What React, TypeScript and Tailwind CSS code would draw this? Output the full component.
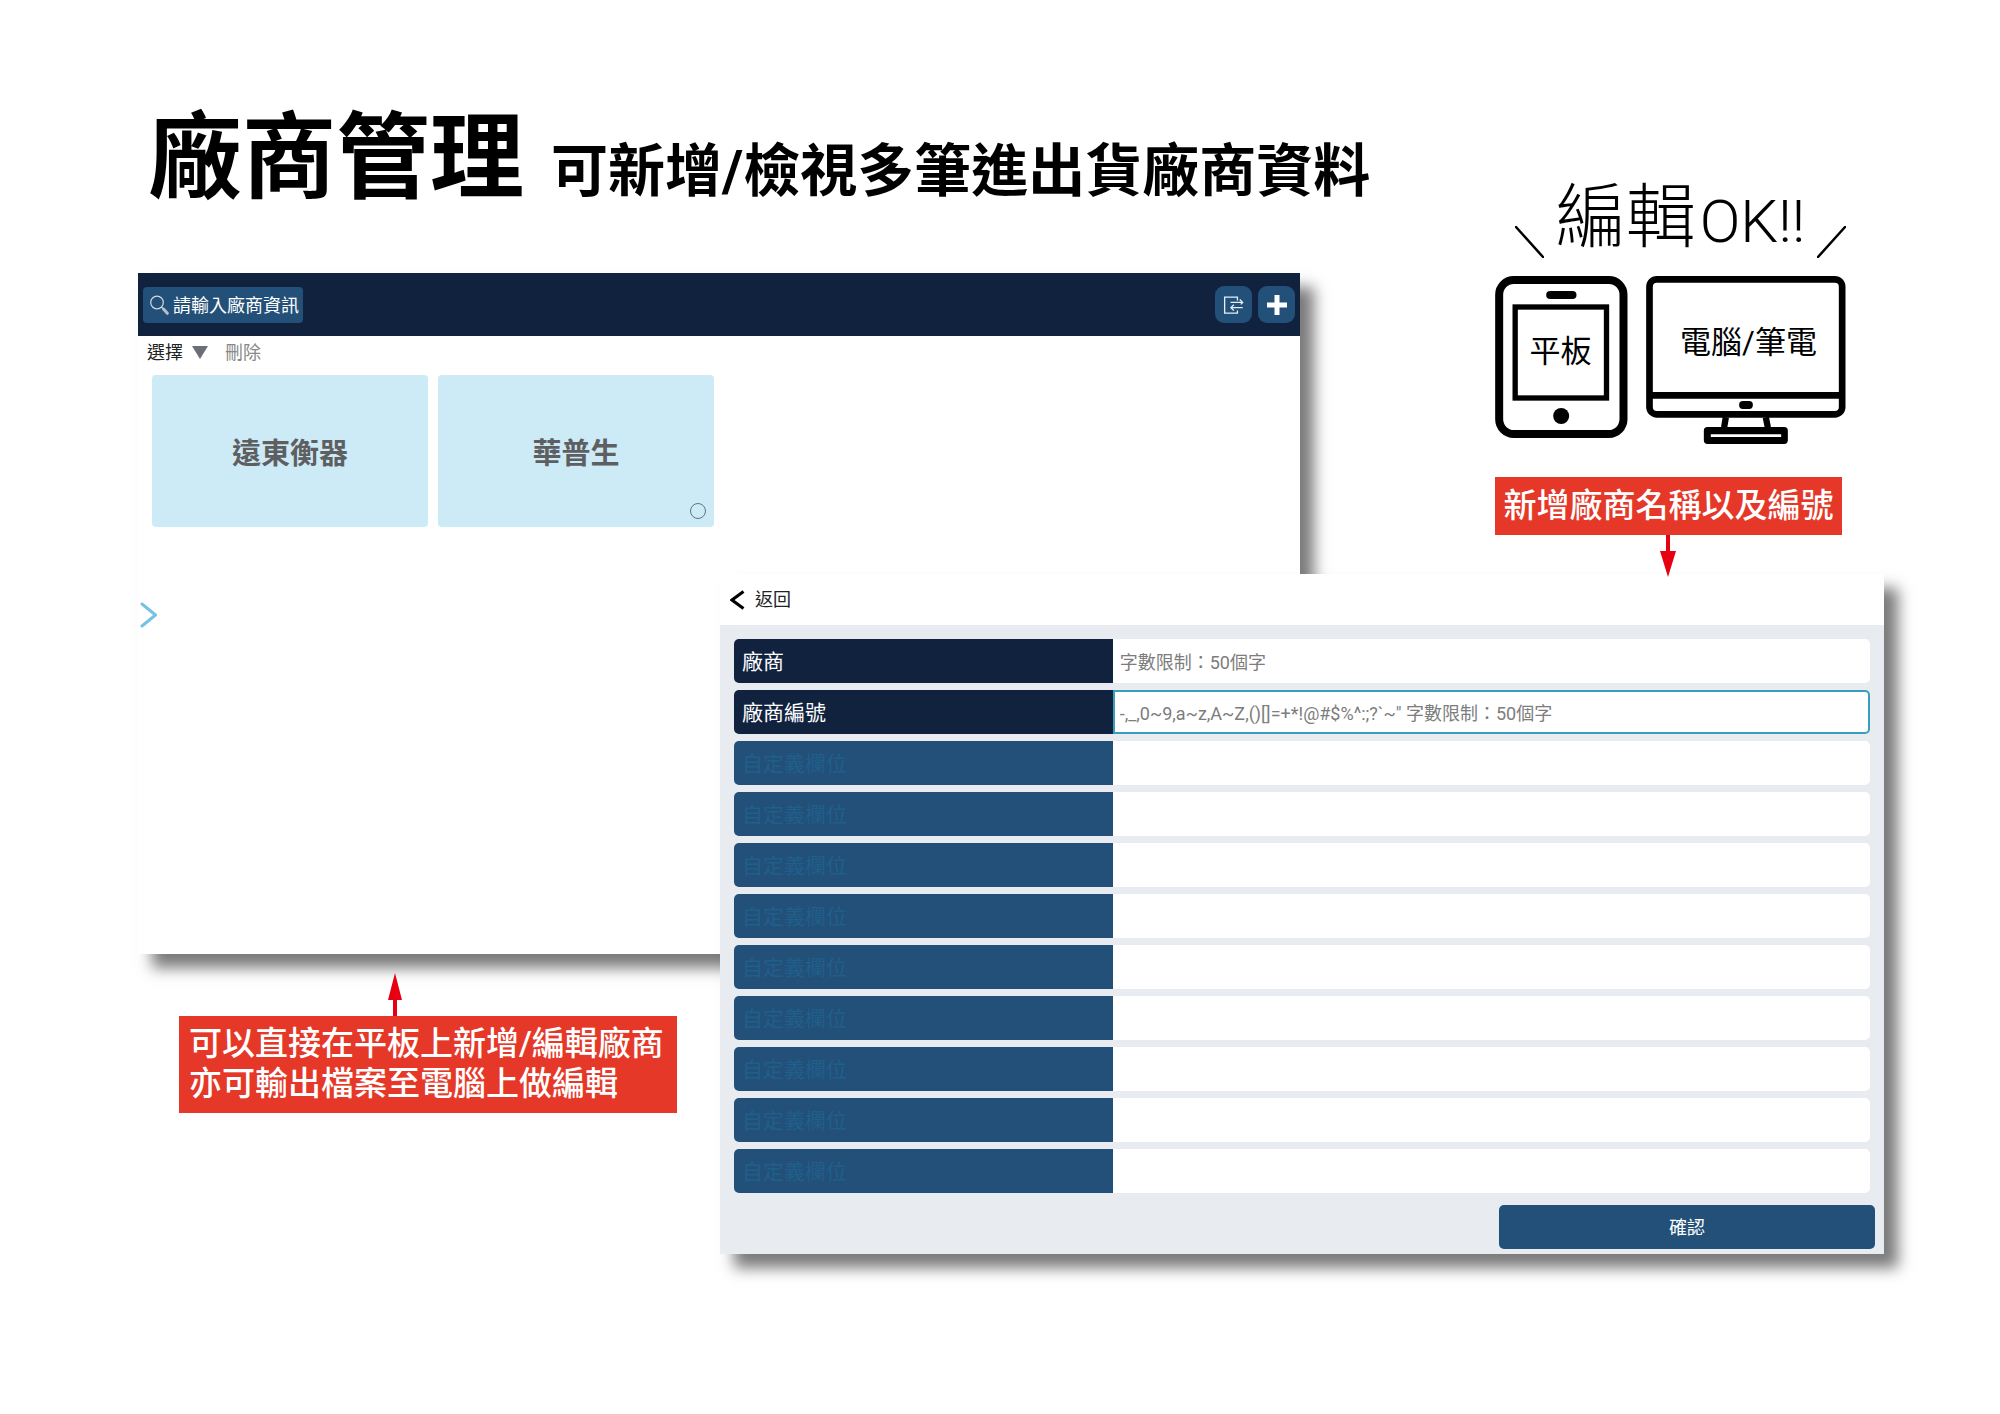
interface FieldRowProps {
  id: string;
  label: string;
  placeholder?: string;
  custom?: boolean;
  active?: boolean;
}

const fields: FieldRowProps[] = [
  { id: 'vendor', label: '廠商', placeholder: '字數限制：50個字' },
  {
    id: 'vendor-code',
    label: '廠商編號',
    placeholder: '-,_,0~9,a~z,A~Z,()[]=+*!@#$%^:;?`~" 字數限制：50個字',
    active: true,
  },
  ...Array.from({ length: 9 }, (_, i) => ({
    id: `custom-${i + 1}`,
    label: '自定義欄位',
    custom: true,
  })),
];

function FieldRow({ id, label, placeholder, custom, active }: FieldRowProps) {
  return (
    <div className="grid h-11 grid-cols-[1fr_2fr]">
      <label
        htmlFor={id}
        className={`flex items-center rounded-l-[5px] px-2 pt-1 text-[21px] ${
          custom ? 'bg-[#235078] text-[#205f8b]' : 'bg-[#11223f] text-white'
        }`}
      >
        {label}
      </label>
      <input
        id={id}
        type="text"
        placeholder={placeholder}
        className={`min-w-0 rounded-r-[5px] border-2 bg-white px-[5px] pt-0.5 text-[18px] outline-none placeholder:text-[#7d7d7d] ${
          active ? 'border-[#3a9fbf]' : 'border-white'
        }`}
      />
    </div>
  );
}

function VendorCard({ name, selectable }: { name: string; selectable?: boolean }) {
  return (
    <article className="relative flex h-[152px] items-center justify-center rounded bg-[#cdebf7] pt-2">
      <h3 className="text-[29px] font-bold text-[#5e5f61]">{name}</h3>
      {selectable && (
        <input
          type="radio"
          aria-label={name}
          className="absolute right-2 bottom-2 size-4 appearance-none rounded-full border border-[#5f7480]"
        />
      )}
    </article>
  );
}

function VendorList() {
  return (
    <section className="col-span-2 col-start-1 row-span-2 row-start-2 bg-white shadow-[14px_14px_14px_rgba(0,0,0,0.52)]">
      <header className="flex h-[63px] items-center bg-[#11223f] pr-[5px] pl-[5px]">
        <label className="flex h-9 w-[160px] items-center gap-1 rounded bg-[#235078] pl-1.5">
          <svg className="h-5 w-5 shrink-0" viewBox="0 0 20 20" fill="none">
            <circle cx="8" cy="7.5" r="6.3" stroke="#cfdbe6" strokeWidth="1.2" />
            <path d="M12.500 12l1.800 2" stroke="#cfdbe6" strokeWidth="1.200" />
            <path d="M14.500 14l3.800 4.300" stroke="#b4c0cb" strokeWidth="3" strokeLinecap="round" />
          </svg>
          <input
            type="text"
            aria-label="搜尋廠商"
            placeholder="請輸入廠商資訊"
            className="w-[128px] bg-transparent pt-0.5 text-[18px] outline-none placeholder:text-white"
          />
        </label>

        <button type="button" aria-label="匯出" className="ml-auto flex size-[37px] items-center justify-center rounded-[9px] bg-[#235078]">
          <svg className="h-5 w-[21px]" viewBox="128 105 64 60" fill="none" stroke="#e4eef6" strokeWidth="4">
            <path d="M172 121V111H133V160H172V152" />
            <path d="M151 127H187M179 118L188 127L182 133" />
            <path d="M188 143H153M161 134L152 143L161 152" />
          </svg>
        </button>
        <button type="button" aria-label="新增" className="ml-1.5 flex size-[37px] items-center justify-center rounded-[9px] bg-[#235078]">
          <svg className="size-5" viewBox="0 0 20 20" stroke="#fff" strokeWidth="5">
            <path d="M10 0V20M0 10H20" />
          </svg>
        </button>
      </header>

      <div className="flex h-[39px] items-center px-[9px] pb-[6px] text-[18px]">
        <button type="button" className="flex items-center gap-[9px] text-[#222]">
          選擇
          <svg className="h-[13px] w-4" viewBox="0 0 16 13" fill="#6b7078">
            <path d="M0 0H16L8 13Z" />
          </svg>
        </button>
        <button type="button" className="ml-[17px] text-[#888]">刪除</button>
      </div>

      <div className="grid grid-cols-4 gap-[10px] px-[14px]">
        <VendorCard name="遠東衡器" />
        <VendorCard name="華普生" selectable />
      </div>

      <button type="button" aria-label="展開" className="mt-[75px] ml-[2px] block">
        <svg className="h-[26px] w-[18px]" viewBox="0 0 18 26" fill="none" stroke="#76c2e5" strokeWidth="3">
          <path d="M2 2L15.500 13L2 24" strokeLinecap="round" strokeLinejoin="round" />
        </svg>
      </button>
    </section>
  );
}

function VendorForm() {
  return (
    <section className="col-span-2 col-start-2 row-span-2 row-start-3 flex flex-col bg-[#e8ebf0] shadow-[14px_14px_14px_rgba(0,0,0,0.52)]">
      <header className="flex h-[51px] items-center bg-white pl-[10px]">
        <button type="button" className="flex items-center gap-[10px] text-[18px] text-[#222]">
          <svg className="h-5 w-[15px]" viewBox="0 0 15 20" fill="none" stroke="#000" strokeWidth="3">
            <path d="M13.500 1.500L2 10L13.500 18.500" />
          </svg>
          返回
        </button>
      </header>

      <form className="flex flex-col" onSubmit={(e) => e.preventDefault()}>
        <div className="flex flex-col gap-[7px] px-[14px] pt-[14px]">
          {fields.map((field) => (
            <FieldRow key={field.id} {...field} />
          ))}
        </div>
        <button
          type="submit"
          className="mt-3 mr-[9px] mb-[5px] h-11 w-[376px] self-end rounded-[5px] bg-[#235078] text-[18px] text-white"
        >
          確認
        </button>
      </form>
    </section>
  );
}

/* 平板與電腦示意圖 */
function Devices() {
  return (
    <svg className="h-[168px] w-full shrink-0" viewBox="75 318 1052 504" fill="none" stroke="#000">
      <rect x="87" y="330" width="373" height="462" rx="44" strokeWidth="24" />
      <rect x="135" y="411" width="274" height="273" strokeWidth="16" />
      <rect x="228" y="363" width="91" height="24" rx="12" fill="#000" stroke="none" />
      <circle cx="273" cy="738" r="24" fill="#000" stroke="none" />

      <rect x="538" y="328" width="578" height="405" rx="22" strokeWidth="20" />
      <path d="M538 676H1116" strokeWidth="20" />
      <rect x="807" y="693" width="41" height="24" rx="11" fill="#000" stroke="none" />
      <path d="M767 742L762 772M887 742L893 772" strokeWidth="19" />
      <rect x="710" y="780" width="234" height="33" rx="2" strokeWidth="18" />
      <path d="M712 796H942" strokeWidth="17" />
      <path d="M722 797H933" stroke="#fff" strokeWidth="8" />

      <g fill="#000" stroke="none" fontSize="93" textAnchor="middle">
        <text x="271" y="576">平板</text>
        <text x="835" y="548">電腦/筆電</text>
      </g>
    </svg>
  );
}

export default function App() {
  return (
    <main
      lang="zh-Hant"
      className="grid min-h-screen grid-cols-[582fr_580fr_584fr] grid-rows-[273px_301px_380px_auto] bg-white pr-[116px] pb-40 pl-[138px] font-['Roboto','Noto_Sans_CJK_TC',sans-serif] text-black"
    >
      <div className="col-span-2 col-start-1 row-start-1 flex items-baseline gap-[27px] pt-[91px] pl-[10px] whitespace-nowrap">
        <h1 className="text-[94px] leading-[136px] font-bold">廠商管理</h1>
        <p className="text-[57px] leading-[80px] font-bold">可新增/檢視多筆進出貨廠商資料</p>
      </div>

      <VendorList />
      <VendorForm />

      <aside className="z-10 col-start-3 row-span-2 row-start-1 mr-[38px] flex w-[351px] flex-col justify-self-end pt-[172px]">
        <div className="flex h-[104px] shrink-0 items-end pb-[18px]">
          <svg className="ml-5 h-8 w-[29px] shrink-0" viewBox="0 0 29 32" stroke="#000" strokeWidth="2.500">
            <path d="M1 1L28 31" strokeLinecap="round" />
          </svg>
          <p className="flex flex-1 items-baseline justify-center gap-1 text-[70px] leading-[72px] font-light whitespace-nowrap">
            編輯<span className="text-[60px]">OK!!</span>
          </p>
          <svg className="h-8 w-[29px] shrink-0" viewBox="0 0 29 32" stroke="#000" strokeWidth="2.500">
            <path d="M28 1L1 31" strokeLinecap="round" />
          </svg>
        </div>
        <Devices />
        <p className="mt-[33px] w-[347px] shrink-0 bg-[#e53829] text-center text-[33px] leading-[58px] font-medium whitespace-nowrap text-white">
          新增廠商名稱以及編號
        </p>
        <svg className="ml-[165px] h-[42px] w-4 shrink-0" viewBox="0 0 16 42" fill="#e60012">
          <path d="M6 0H10V16H16L8 42L0 16H6Z" />
        </svg>
      </aside>

      <aside className="col-start-1 row-start-4 ml-[41px] flex flex-col items-start pt-[19px]">
        <svg className="ml-[208px] h-[43px] w-4" viewBox="0 0 16 43" fill="#e60012">
          <path d="M8 0L15 27H10V43H6V27H1Z" />
        </svg>
        <p className="h-[97px] w-[498px] bg-[#e53829] px-[10px] pt-2 text-[33px] leading-10 font-medium whitespace-nowrap text-white">
          可以直接在平板上新增/編輯廠商
          <br />
          亦可輸出檔案至電腦上做編輯
        </p>
      </aside>
    </main>
  );
}
